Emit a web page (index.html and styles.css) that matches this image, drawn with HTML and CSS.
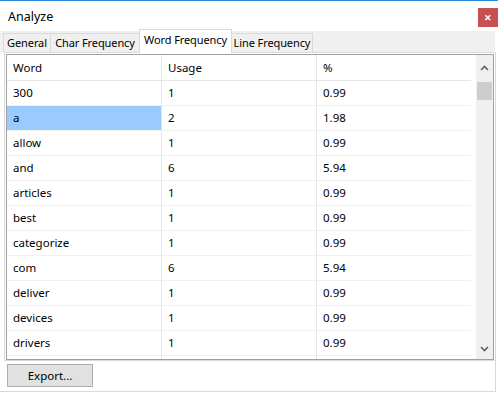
FILE: index.html
```html
<!DOCTYPE html>
<html lang="en">
<head>
  <meta charset="UTF-8">
  <title>Analyze</title>
  <link rel="stylesheet" href="styles.css">
</head>
<body>
  <div class="window">
    <div class="titlebar">
      <span class="title">Analyze</span>
      <div class="close">&#x2715;</div>
    </div>
    <div class="tabs">
      <div class="tab t-general">General</div>
      <div class="tab t-char">Char Frequency</div>
      <div class="tab t-word active">Word Frequency</div>
      <div class="tab t-line">Line Frequency</div>
    </div>
    <div class="page">
      <div class="list">
        <div class="grid">
          <div class="row head"><div class="cell">Word</div><div class="cell">Usage</div><div class="cell">%</div></div>
          <div class="row"><div class="cell">300</div><div class="cell">1</div><div class="cell">0.99</div></div>
          <div class="row"><div class="cell selected">a</div><div class="cell">2</div><div class="cell">1.98</div></div>
          <div class="row"><div class="cell">allow</div><div class="cell">1</div><div class="cell">0.99</div></div>
          <div class="row"><div class="cell">and</div><div class="cell">6</div><div class="cell">5.94</div></div>
          <div class="row"><div class="cell">articles</div><div class="cell">1</div><div class="cell">0.99</div></div>
          <div class="row"><div class="cell">best</div><div class="cell">1</div><div class="cell">0.99</div></div>
          <div class="row"><div class="cell">categorize</div><div class="cell">1</div><div class="cell">0.99</div></div>
          <div class="row"><div class="cell">com</div><div class="cell">6</div><div class="cell">5.94</div></div>
          <div class="row"><div class="cell">deliver</div><div class="cell">1</div><div class="cell">0.99</div></div>
          <div class="row"><div class="cell">devices</div><div class="cell">1</div><div class="cell">0.99</div></div>
          <div class="row"><div class="cell">drivers</div><div class="cell">1</div><div class="cell">0.99</div></div>
          <div class="row"><div class="cell"></div><div class="cell"></div><div class="cell"></div></div>
        </div>
        <div class="scrollbar">
          <svg class="arrow up" width="9" height="6" viewBox="0 0 9 6"><path d="M1 5 L4.5 1.5 L8 5" fill="none" stroke="#606060" stroke-width="1.6"/></svg>
          <div class="thumb"></div>
          <div class="track"></div>
          <svg class="arrow down" width="9" height="6" viewBox="0 0 9 6"><path d="M1 1 L4.5 4.5 L8 1" fill="none" stroke="#606060" stroke-width="1.6"/></svg>
        </div>
      </div>
    </div>
    <div class="footer">
      <button class="btn">Export...</button>
    </div>
  </div>
</body>
</html>
```

FILE: styles.css
```css
body {
  margin: 0;
  font-family: "Noto Sans", "Open Sans", sans-serif;
  font-size: 11.5px;
  color: #000;
  background: #fff;
}
.window {
  width: 498px;
  height: 393px;
  box-sizing: border-box;
  border-top: 1px solid #2b88d8;
  background: #fff;
  overflow: hidden;
}
.titlebar {
  height: 30px;
  display: flex;
  align-items: flex-start;
  justify-content: space-between;
}
.title {
  font-size: 12.5px;
  margin: 7px 0 0 8px;
}
.close {
  width: 20px;
  height: 19px;
  margin-top: 7px;
  background: #c75050;
  color: #fff;
  font-size: 9px;
  font-weight: bold;
  display: flex;
  align-items: center;
  justify-content: center;
}
.tabs {
  height: 21px;
  background: #f0f0f0;
  display: flex;
  align-items: flex-end;
  padding-left: 3px;
  border-right: 3px solid #fff;
}
.tab {
  height: 19px;
  box-sizing: border-box;
  border: 1px solid #d9d9d9;
  border-bottom: none;
  border-right: none;
  background: #f0f0f0;
  font-size: 11px;
  line-height: 18px;
  text-align: center;
  white-space: nowrap;
  letter-spacing: -0.1px;
}
.t-general { width: 47px; }
.t-char { width: 89px; }
.t-word { width: 93px; }
.t-line { width: 81px; border-right: 1px solid #d9d9d9; }
.tab.active {
  height: 24px;
  background: #fff;
  margin-bottom: -1px;
  line-height: 19px;
  position: relative;
  border-right: 1px solid #d9d9d9;
}
.tab.active + .tab {
  border-left: none;
}
.page {
  margin: 0 2px 0 4px;
  height: 309px;
  box-sizing: border-box;
  border: 1px solid #d9d9d9;
  padding: 1px;
  background: #fff;
}
.list {
  height: 306px;
  box-sizing: border-box;
  border: 1px solid #a0a0a0;
  display: flex;
  overflow: hidden;
}
.grid {
  width: 465px;
  overflow: hidden;
}
.row {
  display: grid;
  grid-template-columns: 155px 155px 155px;
  height: 25px;
}
.row.head {
  height: 26px;
}
.cell {
  box-sizing: border-box;
  border-right: 1px solid #e5e5e5;
  border-bottom: 1px solid #f0f0f0;
  padding: 0 6px;
  line-height: 24px;
  white-space: nowrap;
}
.row.head .cell {
  border-bottom-color: #e5e5e5;
  line-height: 25px;
}
.cell.selected {
  background: #99cbfe;
}
.scrollbar {
  width: 17px;
  margin-left: 5px;
  background: #f0f0f0;
  display: flex;
  flex-direction: column;
  align-items: center;
}
.arrow.up {
  margin: 10px 0 9px;
}
.arrow.down {
  margin: 9px 0 7px;
}
.thumb {
  width: 15px;
  height: 18px;
  background: #cdcdcd;
  margin-top: 2px;
}
.track {
  flex: 1;
}
.footer {
  height: 31px;
  margin-right: 2px;
  border-bottom: 1px solid #d9d9d9;
  border-right: 1px solid #d9d9d9;
  box-sizing: border-box;
  padding: 3px 0 0 7px;
}
.btn {
  width: 86px;
  height: 23px;
  background: #e1e1e1;
  border: 1px solid #adadad;
  font-family: "Noto Sans", "Open Sans", sans-serif;
  font-size: 11.5px;
  padding: 0;
  color: #000;
}
```
